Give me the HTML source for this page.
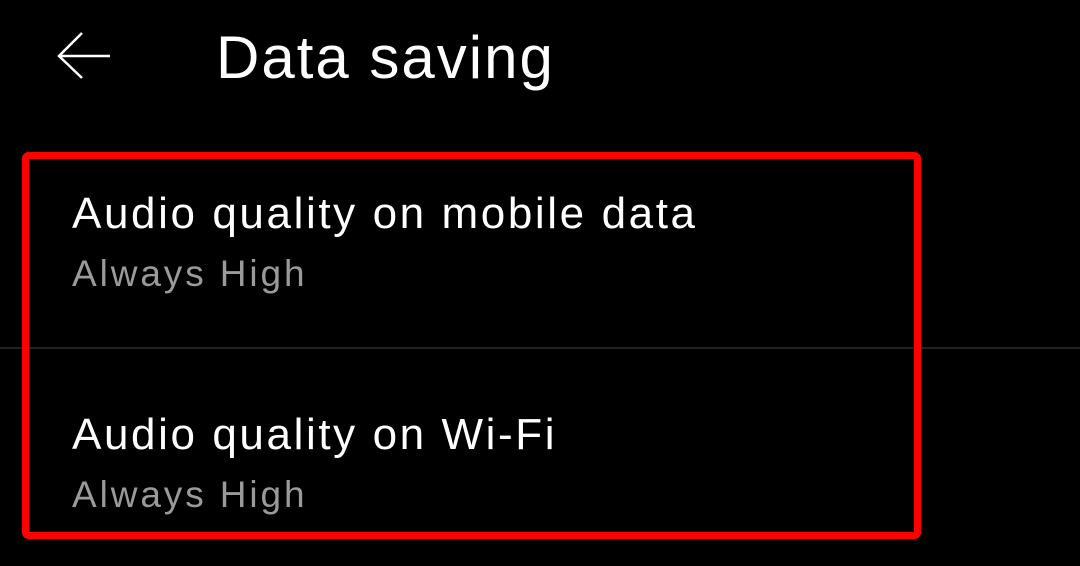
<!DOCTYPE html>
<html><head><style>
html,body{margin:0;padding:0;background:#000;width:1080px;height:566px;overflow:hidden;font-family:"Liberation Sans",sans-serif;}
.t{position:absolute;white-space:nowrap;line-height:1;}
</style></head><body>
<svg style="position:absolute;left:0;top:0" width="1080" height="566">
<path d="M110 56 H60 M82 33 L59 56 L82 78" stroke="#fff" stroke-width="2.5" fill="none"/>
<rect x="0" y="347" width="1080" height="2" fill="#222"/>
<rect x="25.5" y="155.5" width="892" height="380" rx="3" stroke="#f00" stroke-width="7" fill="none"/>
</svg>
<div class="t" style="left:216px;top:28px;font-size:60px;letter-spacing:2px;color:#fff;">Data saving</div>
<div class="t" style="left:72px;top:192px;font-size:44px;letter-spacing:2.6px;color:#fff;">Audio quality on mobile data</div>
<div class="t" style="left:72px;top:255px;font-size:37px;letter-spacing:2.9px;color:#9a9a9a;">Always High</div>
<div class="t" style="left:72px;top:413px;font-size:44px;letter-spacing:2.6px;color:#fff;">Audio quality on Wi-Fi</div>
<div class="t" style="left:72px;top:476px;font-size:37px;letter-spacing:2.9px;color:#9a9a9a;">Always High</div>
</body></html>
